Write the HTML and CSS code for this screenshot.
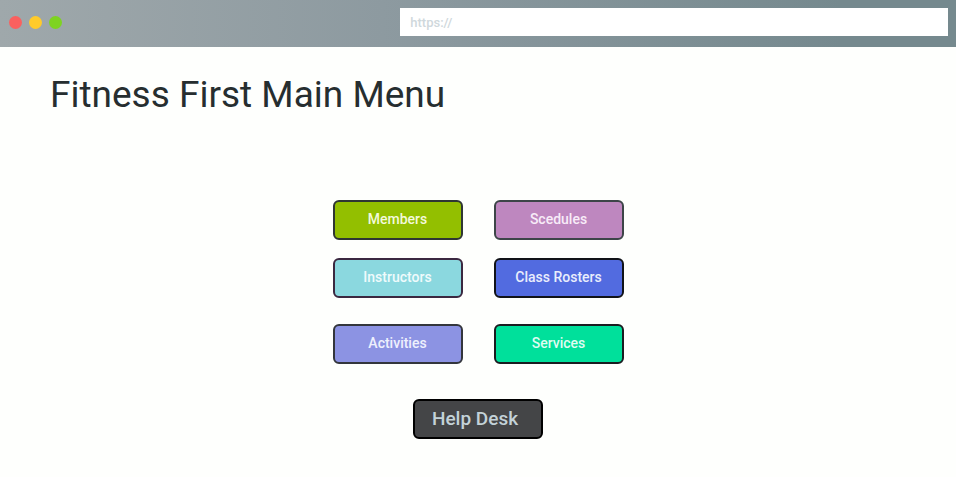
FILE: index.html
```html
<!DOCTYPE html>
<html lang="en">
<head>
<meta charset="utf-8">
<title>Fitness First Main Menu</title>
<link rel="stylesheet" href="styles.css">
</head>
<body>
<header class="browser-bar">
  <div class="lights">
    <span class="light light-red"></span>
    <span class="light light-yellow"></span>
    <span class="light light-green"></span>
  </div>
  <input class="address" type="text" placeholder="https://" aria-label="Address">
</header>
<main class="page">
  <h1 class="title">Fitness First Main Menu</h1>
  <nav class="menu">
    <div class="menu-row">
      <button class="btn members" type="button">Members</button>
      <button class="btn schedules" type="button">Scedules</button>
    </div>
    <div class="menu-row">
      <button class="btn instructors" type="button">Instructors</button>
      <button class="btn rosters" type="button">Class Rosters</button>
    </div>
    <div class="menu-row menu-row-last">
      <button class="btn activities" type="button">Activities</button>
      <button class="btn services" type="button">Services</button>
    </div>
    <button class="btn help" type="button">Help Desk</button>
  </nav>
</main>
</body>
</html>
```
FILE: styles.css
```css
* {
  box-sizing: border-box;
}

body {
  margin: 0;
  background: #fefffd;
  font-family: Roboto, "Liberation Sans", sans-serif;
}

.browser-bar {
  display: grid;
  grid-template-columns: 5fr 7fr;
  align-items: center;
  padding: 8px 8px 11px 9px;
  background: linear-gradient(90deg, #9fa8ab, #8d9aa0 40%, #75898e 88%);
}

.lights {
  display: flex;
  gap: 7px;
}

.light {
  width: 13px;
  height: 13px;
  border-radius: 50%;
}

.light-red { background: #fa605f; }
.light-yellow { background: #ffcb2b; }
.light-green { background: #7ed321; }

.address {
  width: 100%;
  height: 28px;
  padding: 0 10px;
  border: 0;
  border-radius: 0;
  background: #fff;
  color: #26323a;
  font: 500 13px Roboto, "Liberation Sans", sans-serif;
}

.address::placeholder {
  color: #cfd8dc;
  opacity: 1;
}

.page {
  padding: 24px 50px;
}

.title {
  margin: 0;
  color: #262e30;
  font-size: 37px;
  font-weight: 400;
  line-height: 48px;
}

.menu {
  display: flex;
  flex-direction: column;
  align-items: center;
  gap: 18px;
  padding-top: 81px;
}

.menu-row {
  display: flex;
  gap: 31px;
}

.menu-row-last {
  padding: 8px 0 17px;
}

.btn {
  width: 130px;
  height: 40px;
  padding: 0 4px 2px;
  border: 2px solid;
  border-radius: 6px;
  font: 500 14px Roboto, "Liberation Sans", sans-serif;
  color: #f3f5fb;
}

.members { background: #93bf00; border-color: #2f3634; color: #f3f9dc; }
.schedules { background: #be87bf; border-color: #3d4548; color: #f8ecf8; }
.instructors { background: #8bd8df; border-color: #3b2840; color: #effbfc; }
.rosters { background: #526be0; border-color: #111318; color: #e9edfc; }
.activities { background: #8c93e3; border-color: #33363c; color: #eef0fd; }
.services { background: #00e09b; border-color: #1b1c20; color: #dffcf1; }

.help {
  padding: 0 6px 1px 0;
  background: #444547;
  border-color: #000;
  color: #c3d2d8;
  font-size: 19px;
}
```
